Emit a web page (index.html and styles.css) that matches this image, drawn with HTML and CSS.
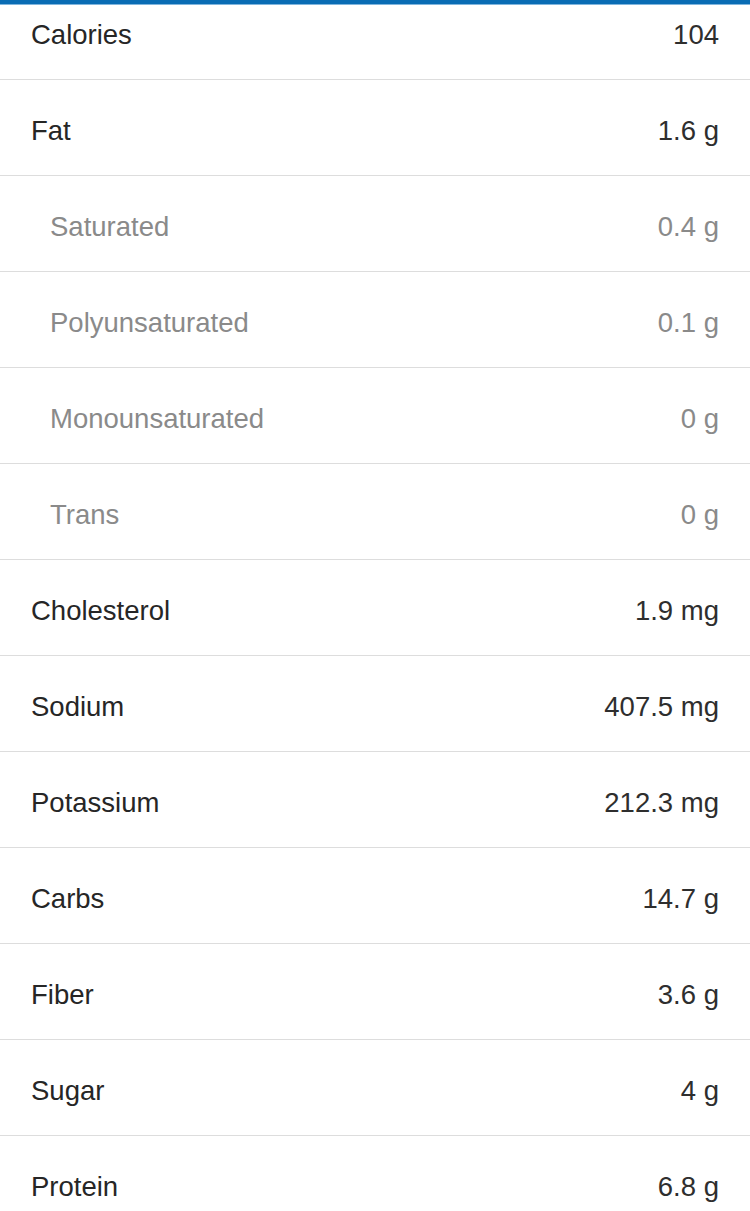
FILE: index.html
```html
<!DOCTYPE html>
<html lang="en">
<head>
<meta charset="utf-8">
<title>Nutrition</title>
<link rel="stylesheet" href="styles.css">
</head>
<body>
<div class="topbar"></div>
<ul class="nutrients">
  <li class="row"><span class="label">Calories</span><span class="value">104</span></li>
  <li class="row"><span class="label">Fat</span><span class="value">1.6 g</span></li>
  <li class="row sub"><span class="label">Saturated</span><span class="value">0.4 g</span></li>
  <li class="row sub"><span class="label">Polyunsaturated</span><span class="value">0.1 g</span></li>
  <li class="row sub"><span class="label">Monounsaturated</span><span class="value">0 g</span></li>
  <li class="row sub"><span class="label">Trans</span><span class="value">0 g</span></li>
  <li class="row"><span class="label">Cholesterol</span><span class="value">1.9 mg</span></li>
  <li class="row"><span class="label">Sodium</span><span class="value">407.5 mg</span></li>
  <li class="row"><span class="label">Potassium</span><span class="value">212.3 mg</span></li>
  <li class="row"><span class="label">Carbs</span><span class="value">14.7 g</span></li>
  <li class="row"><span class="label">Fiber</span><span class="value">3.6 g</span></li>
  <li class="row"><span class="label">Sugar</span><span class="value">4 g</span></li>
  <li class="row"><span class="label">Protein</span><span class="value">6.8 g</span></li>
</ul>
</body>
</html>
```
FILE: styles.css
```css
html, body {
  margin: 0;
  padding: 0;
  background: #ffffff;
  overflow: hidden;
}
body {
  font-family: "Liberation Sans", Arial, sans-serif;
  color: #262626;
}
.topbar {
  position: fixed;
  top: 0;
  left: 0;
  right: 0;
  height: 4px;
  background: #0a6cb4;
  border-bottom: 1px solid #80b5dd;
  z-index: 2;
}
.nutrients {
  list-style: none;
  margin: -16px 0 0 0;
  padding: 0;
}
.row {
  display: flex;
  justify-content: space-between;
  align-items: center;
  box-sizing: border-box;
  height: 96px;
  padding: 7px 31px 0 31px;
  border-bottom: 1px solid #dddddd;
  font-size: 27.5px;
}
.row .value {
  color: #2e2e2e;
}
.row.sub {
  padding-left: 50px;
}
.row.sub .label,
.row.sub .value {
  color: #8a8a8a;
}
```
